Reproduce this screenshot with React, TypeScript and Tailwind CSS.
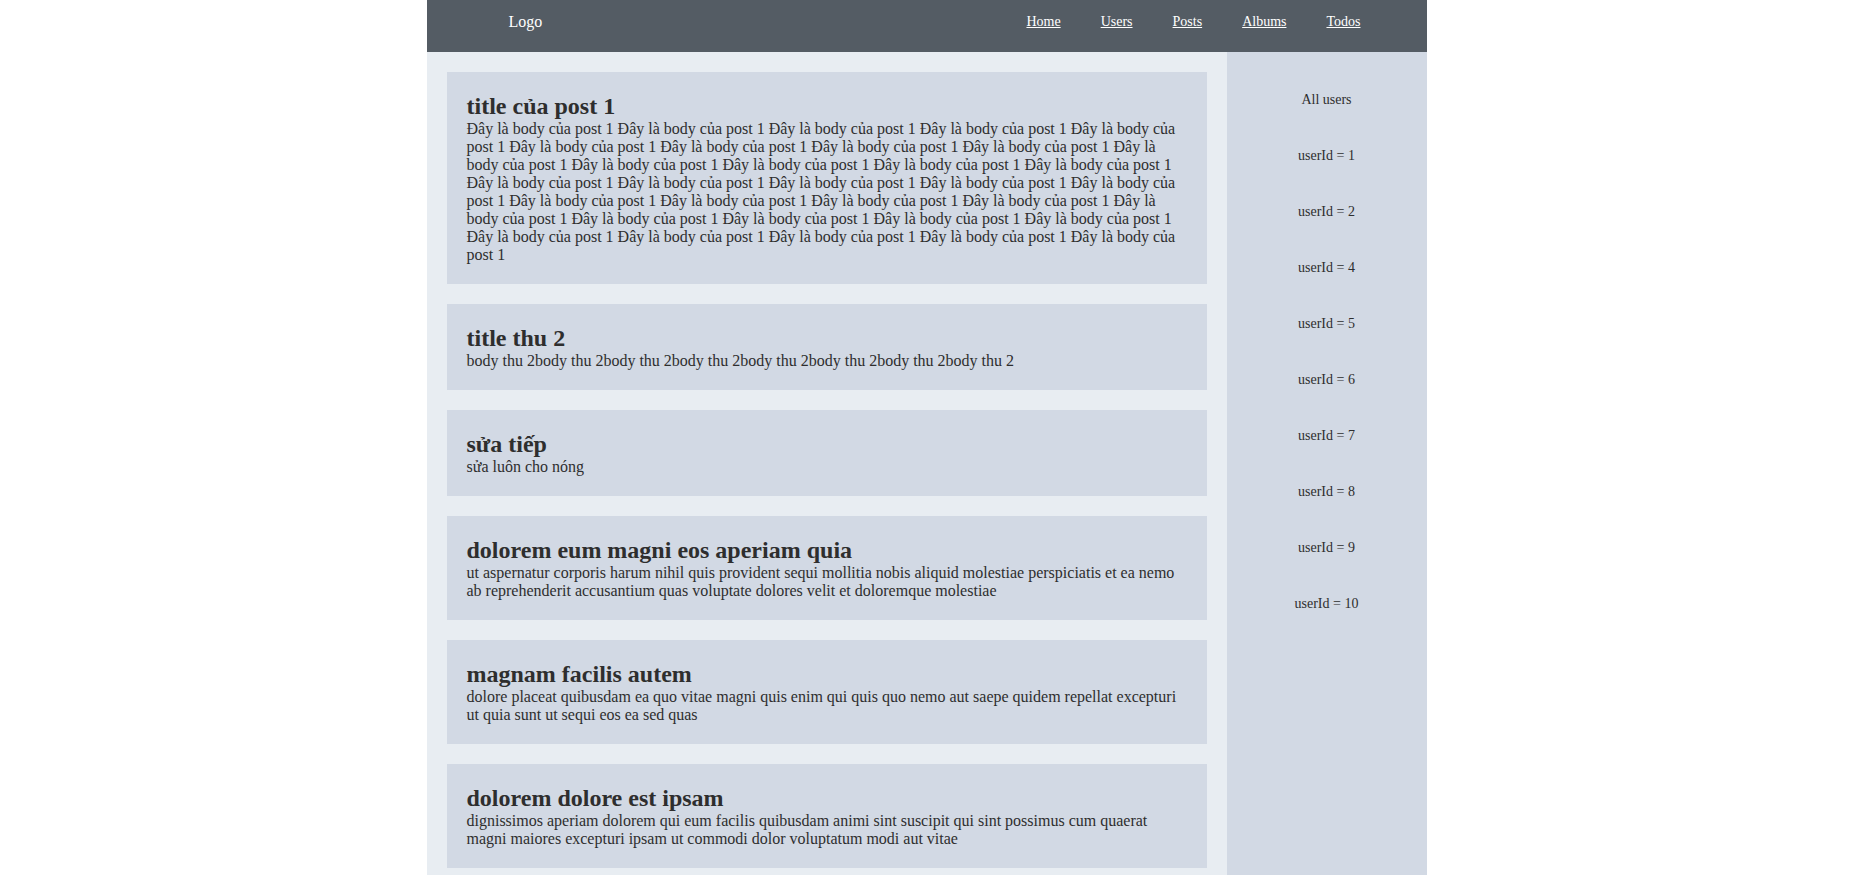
const posts = [
  {
    title: "title của post 1",
    body: Array(33).fill("Đây là body của post 1").join(" "),
  },
  {
    title: "title thu 2",
    body: "body thu 2body thu 2body thu 2body thu 2body thu 2body thu 2body thu 2body thu 2",
  },
  { title: "sửa tiếp", body: "sửa luôn cho nóng" },
  {
    title: "dolorem eum magni eos aperiam quia",
    body: "ut aspernatur corporis harum nihil quis provident sequi mollitia nobis aliquid molestiae perspiciatis et ea nemo ab reprehenderit accusantium quas voluptate dolores velit et doloremque molestiae",
  },
  {
    title: "magnam facilis autem",
    body: "dolore placeat quibusdam ea quo vitae magni quis enim qui quis quo nemo aut saepe quidem repellat excepturi ut quia sunt ut sequi eos ea sed quas",
  },
  {
    title: "dolorem dolore est ipsam",
    body: "dignissimos aperiam dolorem qui eum facilis quibusdam animi sint suscipit qui sint possimus cum quaerat magni maiores excepturi ipsam ut commodi dolor voluptatum modi aut vitae",
  },
];

const navLinks = ["Home", "Users", "Posts", "Albums", "Todos"];
const userIds = [1, 2, 4, 5, 6, 7, 8, 9, 10];

const App = () => {
  return (
    <div className="min-h-screen bg-white font-['Liberation_Serif','Times_New_Roman',serif] leading-[1.15] text-[#2e2e2e]">
      <div className="w-[1000px] mx-auto">
        <header className="h-[52px] bg-[#545c64] flex justify-between items-start pt-[13px] pl-[82px] pr-[66px]">
          <span className="text-white text-[16px] leading-[1.15]">Logo</span>
          <nav className="flex gap-[40px] pt-[1px]">
            {navLinks.map((item, i) => (
              <a key={i} href="#" className="text-white text-[14px] leading-[1.15] underline">
                {item}
              </a>
            ))}
          </nav>
        </header>
        <div className="flex">
          <main className="w-[800px] bg-[#e8edf2] pt-5 pb-5 flex flex-col gap-5">
            {posts.map((post, i) => (
              <div key={i} className="mx-5 bg-[#d2d9e4] p-5">
                <h2 className="text-[24px] leading-[28px] font-bold">{post.title}</h2>
                <p className="text-[16px] leading-[18px]">{post.body}</p>
              </div>
            ))}
          </main>
          <aside className="w-[200px] bg-[#d2d9e4] pt-5">
            <ul className="text-[14px] leading-[16px] text-center">
              <li className="py-5">All users</li>
              {userIds.map((id) => (
                <li key={id} className="py-5">
                  userId = {id}
                </li>
              ))}
            </ul>
          </aside>
        </div>
      </div>
    </div>
  );
};

export default App;
